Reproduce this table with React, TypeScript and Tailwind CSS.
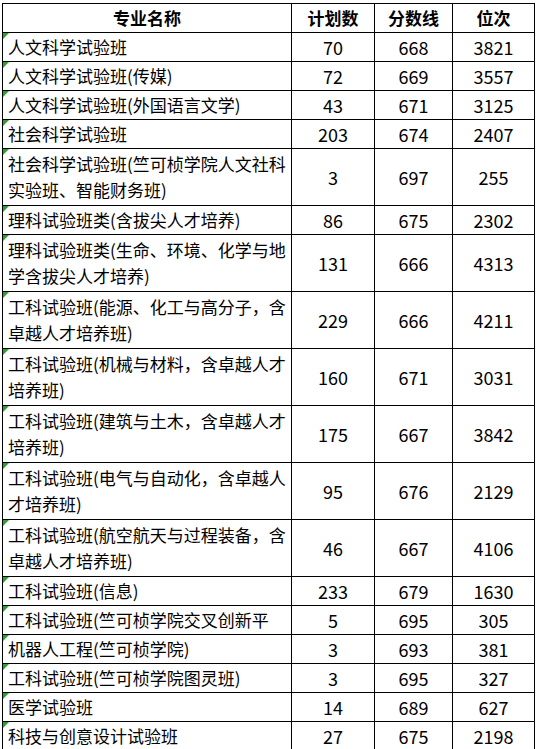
type Row = {
	name: string[];
	plan: number;
	score: number;
	rank: number;
	cut?: boolean;
};

const rows: Row[] = [
	{ name: ['人文科学试验班'], plan: 70, score: 668, rank: 3821 },
	{ name: ['人文科学试验班(传媒)'], plan: 72, score: 669, rank: 3557 },
	{ name: ['人文科学试验班(外国语言文学)'], plan: 43, score: 671, rank: 3125 },
	{ name: ['社会科学试验班'], plan: 203, score: 674, rank: 2407 },
	{ name: ['社会科学试验班(竺可桢学院人文社科', '实验班、智能财务班)'], plan: 3, score: 697, rank: 255 },
	{ name: ['理科试验班类(含拔尖人才培养)'], plan: 86, score: 675, rank: 2302 },
	{ name: ['理科试验班类(生命、环境、化学与地', '学含拔尖人才培养)'], plan: 131, score: 666, rank: 4313 },
	{ name: ['工科试验班(能源、化工与高分子，含', '卓越人才培养班)'], plan: 229, score: 666, rank: 4211 },
	{ name: ['工科试验班(机械与材料，含卓越人才', '培养班)'], plan: 160, score: 671, rank: 3031 },
	{ name: ['工科试验班(建筑与土木，含卓越人才', '培养班)'], plan: 175, score: 667, rank: 3842 },
	{ name: ['工科试验班(电气与自动化，含卓越人', '才培养班)'], plan: 95, score: 676, rank: 2129 },
	{ name: ['工科试验班(航空航天与过程装备，含', '卓越人才培养班)'], plan: 46, score: 667, rank: 4106 },
	{ name: ['工科试验班(信息)'], plan: 233, score: 679, rank: 1630 },
	{ name: ['工科试验班(竺可桢学院交叉创新平'], plan: 5, score: 695, rank: 305 },
	{ name: ['机器人工程(竺可桢学院)'], plan: 3, score: 693, rank: 381 },
	{ name: ['工科试验班(竺可桢学院图灵班)'], plan: 3, score: 695, rank: 327 },
	{ name: ['医学试验班'], plan: 14, score: 689, rank: 627 },
	{ name: ['科技与创意设计试验班'], plan: 27, score: 675, rank: 2198 },
];

function DataRow({ row }: { readonly row: Row }) {
	const tall = row.name.length > 1;
	return (
		<div className={`flex border-b border-black ${tall ? 'h-[57px]' : 'h-[29px]'}`}>
			<div className="relative flex w-[289px] flex-col justify-center overflow-hidden whitespace-nowrap border-r border-black pl-[5px] text-[17px] leading-[26px]">
				<span className="absolute left-0 top-0 h-0 w-0 border-r-[6px] border-t-[6px] border-r-transparent border-t-[#2ea02e]" />
				{row.name.map((line) => (
					<span key={line}>{line}</span>
				))}
			</div>
			<div className="flex w-[83px] items-center justify-center border-r border-black text-[18px]">{row.plan}</div>
			<div className="flex w-[78px] items-center justify-center border-r border-black text-[18px]">{row.score}</div>
			<div className="flex w-[82px] items-center justify-center border-r border-black text-[18px]">{row.rank}</div>
		</div>
	);
}

export default function App() {
	return (
		<div className="h-[749px] w-[538px] overflow-hidden bg-white font-['Noto_Sans_CJK_SC',sans-serif] text-black">
			<div className="ml-[2px] mt-[3px] w-[533px] border-l border-t border-black">
				<div className="flex h-[29px] border-b border-black text-[17px] font-bold">
					<div className="flex w-[289px] items-center justify-center border-r border-black">专业名称</div>
					<div className="flex w-[83px] items-center justify-center border-r border-black">计划数</div>
					<div className="flex w-[78px] items-center justify-center border-r border-black">分数线</div>
					<div className="flex w-[82px] items-center justify-center border-r border-black">位次</div>
				</div>
				{rows.map((row) => (
					<DataRow key={row.name[0]} row={row} />
				))}
			</div>
		</div>
	);
}
